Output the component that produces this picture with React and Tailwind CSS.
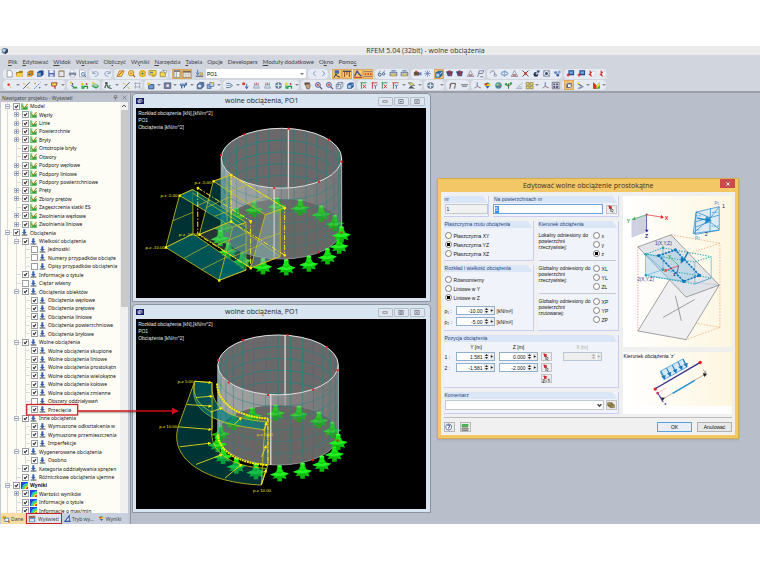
const MENU = [
    ['', 'P', 'lik'], ['', 'E', 'dytować'], ['', 'W', 'idok'], ['W', 's', 'tawić'], ['Ob', 'l', 'iczyć'],
    ['W', 'y', 'niki'], ['', 'N', 'arzędzia'], ['', 'T', 'abela'], ['Opc', 'j', 'e'], ['Developers', '', ''],
    ['', 'M', 'oduły dodatkowe'], ['O', 'k', 'no'], ['Pomo', 'c', ''],
]

// Toolbar glyphs, all drawn on a 30x30 grid
const GLYPHS = {
    page: <path d="M7 4h11l6 6v17H7z" fill="#fff" stroke="#667" strokeWidth="2" />,
    open: <><path d="M4 10h8l3-4h11v19H4z" fill="#a67c18" /><path d="M3 26l5-13h20l-5 13z" fill="#f5cf4e" /></>,
    bookA: <><path d="M4 11l9-6h12v15l-9 6H4z" fill="#b97a12" /><path d="M4 12h13v14H4z" fill="#f2b431" /><path d="M8 15h7v6H8z" fill="#2b4f9b" /></>,
    bookB: <><path d="M4 11l9-6h12v15l-9 6H4z" fill="#1d4287" /><path d="M4 12h13v14H4z" fill="#5e90d4" /><path d="M8 15h6v6H8z" fill="#e8a22d" /></>,
    save: <><path d="M4 4h22v22H4z" fill="#5b6fae" /><path d="M8 4h14v9H8z" fill="#f4f6fb" /><path d="M9 18h12v8H9z" fill="#d7dbe9" /></>,
    clip: <><path d="M5 5h20v22H5z" fill="#8a7a62" /><path d="M8 9h14v15H8z" fill="#e5e7ee" /><path d="M10 3h10v5H10z" fill="#c4b27c" /></>,
    print: <><path d="M8 3h12v10H8z" fill="#fff" stroke="#778" /><path d="M3 12h24v10H3z" fill="#7d8ba5" /><path d="M8 19h14v8H8z" fill="#f6f6f6" stroke="#667" /></>,
    preview: <><path d="M5 3h14l5 5v18H5z" fill="#fff" stroke="#889" strokeWidth="2" /><circle cx="17" cy="17" r="6" fill="#b9d8f2" stroke="#46618f" strokeWidth="2" /><path d="M21 21l6 6" stroke="#46618f" strokeWidth="3" /></>,
    undo: <path d="M6 6v9h9M7 14c5-8 17-7 17 3 0 5-5 7-12 7" fill="none" stroke="#8a9cc0" strokeWidth="3" />,
    redo: <path d="M24 6v9h-9M23 14c-5-8-17-7-17 3 0 5 5 7 12 7" fill="none" stroke="#8a9cc0" strokeWidth="3" />,
    plane: <><path d="M3 25l8-19h16l-8 19z" fill="#f4e14d" stroke="#a0502a" strokeWidth="2" /><path d="M8 22L22 7" stroke="#c2281c" strokeWidth="3" /></>,
    find: <><circle cx="14" cy="14" r="9" fill="#f8e36c" stroke="#b47a1a" strokeWidth="3" /><path d="M10 14h8" stroke="#c33" strokeWidth="3" /><path d="M20 20l7 7" stroke="#9a6a1c" strokeWidth="4" /></>,
    gear: <><circle cx="15" cy="15" r="9" fill="#fff" stroke="#e3b21c" strokeWidth="6" /><circle cx="15" cy="15" r="4" fill="#4b7d35" /></>,
    screen: <><path d="M3 5h24v15H3z" fill="#f7dc3d" stroke="#8f7a22" strokeWidth="2" /><path d="M7 9h10v5H7z" fill="#4e79b9" /><path d="M12 20h12v6H12z" fill="#c7a22c" /></>,
    tag: <><path d="M4 10h17v16H4z" fill="#f5d94c" stroke="#6b6b44" strokeWidth="2" /><path d="M12 3l14 3-4 9z" fill="#fff" stroke="#667" strokeWidth="2" /></>,
    pane: <><path d="M6 4h18v22H6z" fill="#eef0f6" stroke="#6d6d78" strokeWidth="2" /><path d="M6 4h18v5H6z" fill="#7c7c88" /><path d="M13 9v17" stroke="#7c7c88" strokeWidth="2" /></>,
    table: <><path d="M3 6h24v19H3z" fill="#eee" stroke="#7a6a5c" strokeWidth="2" /><path d="M3 6h24v5H3z" fill="#7a6a5c" /><path d="M4 17h22M11 11v14M19 11v14" stroke="#998" /></>,
    load: <><path d="M9 3v14M4 12l5 7 5-7" fill="none" stroke="#3a6fc0" strokeWidth="3" /><path d="M3 24h24" stroke="#445" strokeWidth="3" /><path d="M17 12h8v8h-8z" fill="#e3c238" stroke="#777" /></>,
    prev: <path d="M19 7l-9 8 9 8" fill="none" stroke="#6f8fd0" strokeWidth="3" />,
    next: <path d="M11 7l9 8-9 8" fill="none" stroke="#6f8fd0" strokeWidth="3" />,
    pointer: <><path d="M8 4h13v10H8z" fill="#3a66b1" /><path d="M6 26l6-11 4 7 8 2" fill="none" stroke="#232f55" strokeWidth="3" /></>,
    ruler: <><path d="M3 7h24" stroke="#3d4d77" strokeWidth="4" /><path d="M8 8v16M15 8v9M22 8v16" stroke="#8a4c24" strokeWidth="3" /></>,
    wave: <><path d="M5 22l7-16 7 10 6 6" fill="none" stroke="#2f4f9c" strokeWidth="4" /><path d="M3 25h24" stroke="#c13a2c" strokeWidth="3" /></>,
    values: <><path d="M3 8h24M3 22h24" stroke="#534a68" strokeWidth="2" /><path d="M5 15h5M13 15h5M21 15h5" stroke="#c2381f" strokeWidth="5" /></>,
    glasses: <><circle cx="9" cy="19" r="5" fill="#d6e2ee" stroke="#38598c" strokeWidth="3" /><circle cx="22" cy="16" r="4" fill="#d6e2ee" stroke="#38598c" strokeWidth="3" /><path d="M5 15l6-9M22 11l3-6" stroke="#38598c" strokeWidth="2" /></>,
    frame: <><path d="M4 24V11h22v13" fill="none" stroke="#56647e" strokeWidth="3" /><path d="M8 16h14v8H8z" fill="#d9ca5e" stroke="#555" /><path d="M8 6h14" stroke="#2f69ac" strokeWidth="3" /></>,
    camera: <><path d="M3 10h18v12H3z" fill="#6d5240" /><path d="M21 14l7-4v12l-7-4z" fill="#3e71b8" /><path d="M7 6h8v4H7z" fill="#c24a2c" /></>,
    star: <path d="M15 4v22M4 15h22M7 7l16 16M23 7L7 23" stroke="#4f6fae" strokeWidth="2" />,
    cube: <><path d="M4 11l9-6h13v14l-8 7H4z" fill="#3568a9" /><path d="M7 14h9v9H7z" fill="#b7d2ec" /><path d="M18 15l6-6" stroke="#fff" strokeWidth="2" /></>,
    redcube: <><path d="M4 9l11-5 11 5-3 15H9z" fill="#3c589a" /><path d="M11 7h9v15h-7z" fill="#c0392b" /><path d="M4 9l11 6 11-6" fill="none" stroke="#1e3467" strokeWidth="2" /></>,
    truss: <><path d="M4 25L15 5l11 20z" fill="#e8ebf2" stroke="#6c7796" strokeWidth="2" /><path d="M9 17h12v8H9z" fill="#b98383" /></>,
    flag: <path d="M6 26L11 6h15l-4 9H9M14 26h10" fill="none" stroke="#6b7793" strokeWidth="3" />,
    hook: <><path d="M5 14c0-11 14-11 14 0v7" fill="none" stroke="#7c889e" strokeWidth="3" /><circle cx="21" cy="21" r="4" fill="none" stroke="#6a7690" strokeWidth="2" /></>,
    orbit: <><ellipse cx="15" cy="15" rx="11" ry="6" fill="none" stroke="#4b82c5" strokeWidth="3" /><path d="M15 4v22" stroke="#7a8dae" strokeWidth="2" /></>,
    cross: <><path d="M5 5l20 20M25 5L5 25" stroke="#4a4248" strokeWidth="3" /><path d="M11 11h8v8h-8z" fill="#d22f22" /></>,
    ball: <><circle cx="13" cy="18" r="8" fill="#242f49" /><circle cx="16" cy="15" r="4" fill="#a9bedb" /><path d="M14 6l12-2-3 9z" fill="#2f4576" /></>,
    lens: <><path d="M4 4h22v22H4z" fill="#8d96a8" /><circle cx="15" cy="15" r="8" fill="#eef2f6" /><circle cx="15" cy="15" r="5" fill="#354a78" /></>,
    balls: <><circle cx="9" cy="12" r="5" fill="#6286c2" /><circle cx="21" cy="10" r="5" fill="#86a2cf" /><circle cx="16" cy="20" r="5" fill="#3c5f9f" /></>,
    boxred: <><path d="M8 4h19v17H8z" fill="#23518e" /><path d="M12 8h11v8H12z" fill="#78acd9" /><path d="M2 20h10M7 15v10" stroke="#d3231e" strokeWidth="4" /></>,
    arrowred: <><path d="M15 8h12v16H15z" fill="#f6f6fa" stroke="#9aa" /><path d="M9 3l8 10h-5l4 14L4 17h5z" fill="#cf2420" /></>,
    node: <><path d="M15 15l5 8" stroke="#e1b829" strokeWidth="3" /><circle cx="12" cy="12" r="4" fill="#d4261f" /></>,
    line: <><path d="M4 26L26 4" stroke="#4c5d4c" strokeWidth="3" /><path d="M3 8l8 3M18 21l8 4" stroke="#dbb42c" strokeWidth="3" /></>,
    dline: <><path d="M4 26L25 5" stroke="#4975ad" strokeWidth="3" strokeDasharray="6 3" /><circle cx="22" cy="22" r="3" fill="#58a" /><circle cx="7" cy="8" r="3" fill="#dca426" /></>,
    surf: <><path d="M5 6h19l-4 11H6z" fill="#f2d750" stroke="#ad3a2c" strokeWidth="3" /><path d="M15 17l3 9" stroke="#c9302a" strokeWidth="4" /></>,
    support: <><path d="M5 4l9 6-5 6 12 7" fill="none" stroke="#333c50" strokeWidth="3" /><path d="M11 25h16v-6H16z" fill="#22a44c" /><circle cx="7" cy="6" r="4" fill="#e6cf38" /></>,
    hinge: <><circle cx="8" cy="10" r="5" fill="#e2d23c" /><path d="M7 15v9h6v-6h12v8" fill="none" stroke="#159a3a" strokeWidth="4" /><circle cx="22" cy="10" r="3" fill="#c33" /></>,
    slab: <><path d="M3 18l10-6 14 6-10 8z" fill="#2da24e" /><path d="M3 15l10-6 14 6-10 6z" fill="#a4d8b0" stroke="#287a40" /><circle cx="8" cy="7" r="4" fill="#e2c837" /></>,
    bridge: <><path d="M3 24c2-14 8-14 11-2l11 3" fill="none" stroke="#46504d" strokeWidth="4" /><path d="M4 4h8v7H4z" fill="#3d4148" /><path d="M15 20l6-6" stroke="#37974e" strokeWidth="4" /></>,
    mesh: <path d="M4 8h22M4 20h22M8 4v22M22 4v22" stroke="#8992a6" strokeWidth="2" />,
    solid: <><path d="M9 12h17v14H9z" fill="#6f9ccc" stroke="#2e4d80" strokeWidth="3" /><circle cx="9" cy="9" r="5" fill="#e6cb3c" /></>,
    hole: <><path d="M4 6h22v19H4z" fill="#6b86b2" stroke="#3a4c6e" strokeWidth="2" /><path d="M11 11h9v9h-9z" fill="#fff" stroke="#c33" /></>,
    beam: <><path d="M4 10h20v5H4z" fill="#8ab0d8" stroke="#2e5a93" strokeWidth="2" /><path d="M9 15v10M18 15v7M24 5v8" stroke="#2e5a93" strokeWidth="4" /></>,
    set: <><path d="M4 12l8-7h14v13l-8 8H4z" fill="#5a7bad" stroke="#27406d" strokeWidth="2" /><circle cx="12" cy="17" r="5" fill="#e8edf6" /></>,
    group: <><path d="M4 11h13v14H4z" fill="#88a6cf" stroke="#33568c" strokeWidth="2" /><path d="M13 5h13v13H13z" fill="#c9d9ec" stroke="#33568c" strokeWidth="2" /><circle cx="22" cy="7" r="4" fill="#e3c22f" /></>,
    move: <><path d="M4 8h12l9 7-9 7H4" fill="none" stroke="#54729e" strokeWidth="3" /><path d="M4 15h16" stroke="#8ba6c5" strokeWidth="3" /></>,
    force: <><path d="M19 9v15M14 18l5 8 5-8" fill="none" stroke="#2f5ea7" strokeWidth="3" /><circle cx="9" cy="9" r="5" fill="#d5372a" /></>,
    table2: <><path d="M5 24l4-13h10l6 13z" fill="#c6d2e3" stroke="#8191ad" strokeWidth="2" /><path d="M9 5v8M15 5v8M21 5v8" stroke="#c9453a" strokeWidth="2" /></>,
    globe: <><circle cx="15" cy="15" r="10" fill="#6d8ea9" stroke="#4d5c6b" strokeWidth="2" /><path d="M5 15h20M15 5v20" stroke="#e4ebef" strokeWidth="3" /></>,
    zoom: <><circle cx="13" cy="13" r="8" fill="#dce7f5" stroke="#3e4c92" strokeWidth="3" /><path d="M9 13h8M13 9v8" stroke="#c8332b" strokeWidth="3" /><path d="M19 19l8 8" stroke="#5a4476" strokeWidth="4" /></>,
    grab: <><path d="M5 5h18v8H5z" fill="#5d4a3b" /><path d="M8 12l5 14h8l4-14" fill="#c8a178" stroke="#444" strokeWidth="2" /></>,
    wire: <path d="M4 12h15v14H4zM11 5h15v14M4 12l7-7v14M19 12l7-7M19 26l7-7M11 19H4" fill="none" stroke="#4e5f86" strokeWidth="2" />,
    axis: <><path d="M5 6h20M8 6v20" stroke="#2b9049" strokeWidth="3" /><path d="M13 12l10 12M23 12L13 24" stroke="#cf3a31" strokeWidth="3" /></>,
    axisb: <><path d="M5 6h20M8 6v20" stroke="#cc382f" strokeWidth="3" /><path d="M13 12l5 6 5-6M18 18v8" fill="none" stroke="#3761ad" strokeWidth="3" /></>,
    layers: <><path d="M4 6h12l10 9H14z" fill="#e7dd74" stroke="#555" strokeWidth="2" /><path d="M6 25l7-8 12 8" fill="#4d5667" stroke="#444" strokeWidth="2" /></>,
    portal: <path d="M6 26l4-18h15l-3 18M10 8L5 14" fill="none" stroke="#5c4a44" strokeWidth="3" />,
    spring: <path d="M3 12h24M7 18h16" stroke="#8b8e95" strokeWidth="4" />,
    triad: <><path d="M14 18V4" stroke="#536fb2" strokeWidth="3" /><path d="M14 18l12 5" stroke="#a85b70" strokeWidth="3" /><path d="M14 18L4 24" stroke="#6b9585" strokeWidth="3" /></>,
    rainbow: <><path d="M4 12l11-8 11 8z" fill="#2b9a47" /><path d="M3 10h24l-4 7H7z" fill="#e9cf34" /><path d="M5 8h9v6H5z" fill="#d33a2d" /><path d="M8 17h14l-7 9z" fill="#2c5fc3" /></>,
    palette: <><circle cx="15" cy="15" r="11" fill="#4e9fa0" /><path d="M9 9h6v6H9z" fill="#d8d13f" /><path d="M16 15h6v6h-6z" fill="#cc4a54" /><path d="M9 17h5v5H9z" fill="#2e65b4" /></>,
    tree: <><path d="M15 8v18M15 18l-8-5M15 16l9-5" stroke="#2c6d33" strokeWidth="3" /><circle cx="7" cy="11" r="4" fill="#2fa03c" /><circle cx="23" cy="8" r="4" fill="#2fa03c" /></>,
    slope: <path d="M4 25L26 5M4 25h20M11 20h13" stroke="#8d97aa" strokeWidth="2" />,
    tiles: <path d="M4 5h10v9H4zM17 5h10v9H17zM4 17h10v9H4zM17 17h10v9H17z" fill="#f1d765" stroke="#756638" strokeWidth="2" />,
    chess: <><path d="M4 4h23v22H4z" fill="#d6d9e2" stroke="#445" strokeWidth="2" /><path d="M8 8h6v6H8zM17 8h6v6h-6zM8 17h6v6H8zM17 17h6v6h-6z" fill="#514a7b" /></>,
    render: <><path d="M4 6h22v20H4z" fill="#d7be8d" /><path d="M7 14l5-5h11v10l-5 5H7z" fill="#5f6e86" /><path d="M12 13h8v8h-8z" fill="#fff" /></>,
    brush: <><path d="M4 24l18-8 5 3-15 8z" fill="#8393ac" /><path d="M7 9l12 8" stroke="#5d6880" strokeWidth="4" /><circle cx="8" cy="7" r="4" fill="#e8d23d" /></>,
    colors: <><path d="M4 4l11 11L26 4v22H4z" fill="#3ba33e" /><path d="M4 4l11 11v11H4z" fill="#d62f24" /><path d="M15 15L26 4v9L15 26z" fill="#f0df3a" /></>,
}

const TOOLBAR_1 = [
    { w: 'w-[84px]', items: ['page', 'open', 'bookA', 'bookB', 'save', 'clip', 'print', 'preview'] },
    { w: 'w-[23px]', items: ['undo', 'redo'] },
    { w: 'w-[54px]', items: ['plane', 'find', 'gear', 'screen', 'tag'] },
    { w: 'w-[22px]', items: ['pane*', 'table*'] },
]
const TOOLBAR_1B = [
    { w: 'w-[20px]', items: ['prev', 'next'] },
    { w: 'w-[43px]', items: ['pointer*', 'ruler*', 'wave*', 'values*'] },
    { w: 'w-[34px]', items: ['glasses', 'frame', 'frame'] },
    { w: 'w-[74px]', items: ['camera', 'star', 'cube*', 'redcube', 'redcube', 'truss', 'flag'] },
    { w: 'w-[75px]', items: ['hook', 'orbit', 'truss', 'cross', 'ball', 'lens', 'balls'] },
    { w: 'w-[43px]', items: ['boxred', 'boxred', 'arrowred', 'arrowred'] },
]
const TOOLBAR_2 = [
    { w: 'w-[62px]', items: ['node', 'v', 'line', 'dline', 'v', 'surf', 'v'] },
    { w: 'w-[33px]', items: ['support', 'hinge', 'slab'] },
    { w: 'w-[40px]', items: ['bridge', 'v', 'line', 'mesh'] },
    { w: 'w-[77px]', items: ['solid', 'v', 'hole', 'v', 'beam', 'v', 'set', 'group', 'v'] },
    { w: 'w-[76px]', items: ['move', 'v', 'force', 'table2', 'table2', 'globe', 'hinge', 'v'] },
    { w: 'w-[54px]', items: ['grab', 'zoom', 'zoom', 'wire', 'cube'] },
    { w: 'w-[65px]', items: ['axis', 'axisb', 'axis', 'axisb', 'v', 'layers', 'v'] },
    { w: 'w-[20px]', items: ['globe', 'v'] },
    { w: 'w-[23px]', items: ['portal', 'spring'] },
    { w: 'w-[89px]', items: ['triad', 'rainbow', 'palette', 'tree', 'slope', 'tiles', 'v', 'triad', 'chess'] },
    { w: 'w-[44px]', items: ['render*', 'brush', 'v', 'colors', 'v'] },
]

// [depth, label, expander, checked, icon]
const TREE = [
    [0, 'Model', '-', 1, 'model'], [1, 'Węzły', '+', 1, 'model'], [1, 'Linie', '+', 1, 'model'],
    [1, 'Powierzchnie', '+', 1, 'model'], [1, 'Bryły', '+', 1, 'model'], [1, 'Ortotropie bryły', '', 1, 'model'],
    [1, 'Otwory', '', 1, 'model'], [1, 'Podpory węzłowe', '+', 1, 'model'], [1, 'Podpory liniowe', '+', 1, 'model'],
    [1, 'Podpory powierzchniowe', '', 1, 'model'], [1, 'Pręty', '+', 1, 'model'], [1, 'Zbiory prętów', '+', 1, 'model'],
    [1, 'Zagęszczenia siatki ES', '', 1, 'model'], [1, 'Zwolnienia węzłowe', '+', 1, 'model'],
    [1, 'Zwolnienia liniowe', '+', 1, 'model'],
    [0, 'Obciążenia', '-', 1, 'load'], [1, 'Wielkość obciążenia', '-', 1, 'load'], [2, 'Jednostki', '', 0, 'load'],
    [2, 'Numery przypadków obciąże', '', 0, 'load'], [2, 'Opisy przypadków obciążenia', '', 0, 'load'],
    [1, 'Informacje o tytule', '', 1, 'load'], [1, 'Ciężar własny', '', 0, 'load'],
    [1, 'Obciążenia obiektów', '-', 1, 'load'], [2, 'Obciążenia węzłowe', '', 1, 'load'],
    [2, 'Obciążenia prętowe', '', 1, 'load'], [2, 'Obciążenia liniowe', '', 1, 'load'],
    [2, 'Obciążenia powierzchniowe', '', 1, 'load'], [2, 'Obciążenia bryłowe', '', 1, 'load'],
    [1, 'Wolne obciążenia', '-', 1, 'load'], [2, 'Wolne obciążenia skupione', '', 1, 'load'],
    [2, 'Wolne obciążenia liniowe', '', 1, 'load'], [2, 'Wolne obciążenia prostokątn', '', 1, 'load'],
    [2, 'Wolne obciążenia wielokątne', '', 1, 'load'], [2, 'Wolne obciążenia kołowe', '', 1, 'load'],
    [2, 'Wolne obciążenia zmienne', '', 1, 'load'], [2, 'Obszary oddziaływań', '', 0, 'load'],
    [2, 'Przecięcia', '', 1, 'load'], [1, 'Inne obciążenia', '-', 1, 'load'],
    [2, 'Wymuszone odkształcenia w', '', 1, 'load'], [2, 'Wymuszone przemieszczenia', '', 1, 'load'],
    [2, 'Imperfekcje', '', 1, 'load'], [1, 'Wygenerowane obciążenia', '-', 1, 'load'], [2, 'Osobno', '', 1, 'load'],
    [1, 'Kategoria oddziaływania sprężen', '', 1, 'load'], [1, 'Różniczkowe obciążenia ujemne', '', 1, 'load'],
    [0, 'Wyniki', '-', 1, 'result'], [1, 'Wartości wyników', '+', 1, 'result'],
    [1, 'Informacje o tytule', '', 1, 'result'], [1, 'Informacje o max/min', '', 1, 'result'],
]

function ToolGroup({ w, items }) {
    return (
        <div className={`flex h-[10px] shrink-0 items-center justify-between rounded-sm bg-[#e6eaf2] pl-[2px] ${w}`}>
            {items.map((item, i) => {
                if (item === 'v') {
                    return <span key={i} className="h-0 w-[4px] shrink-0 border-x-2 border-t-2 border-x-transparent border-t-[#8a8a90]" />
                }
                const on = item.endsWith('*')
                const name = on ? item.slice(0, -1) : item
                return (
                    <button
                        key={i}
                        aria-label={name}
                        className={on ? 'size-[10px] shrink-0 bg-[#fbc56a] outline outline-[#dba75a] -outline-offset-1' : 'size-[9px] shrink-0'}
                    >
                        <svg viewBox="0 0 30 30" className="size-full">{GLYPHS[name]}</svg>
                    </button>
                )
            })}
        </div>
    )
}

function TreeIcon({ kind }) {
    return (
        <svg viewBox="0 0 21 21" className="size-[7px] shrink-0">
            {kind === 'model' && (
                <>
                    <path d="M0 1v19h20V9L9 15z" fill="#35a542" />
                    <path d="M0 1h7v19H0z" fill="#7ed07c" />
                    <path d="M4 8l6 7L20 3" fill="none" stroke="#8a7b22" strokeWidth="3" />
                    <path d="M13 10l6-7" stroke="#e5b13a" strokeWidth="3" />
                </>
            )}
            {kind === 'load' && (
                <>
                    <path d="M7 1h6v8h4l-7 8-7-8h4z" fill="#3b60ad" />
                    <path d="M2 18h17" stroke="#3a4150" strokeWidth="3" />
                </>
            )}
            {kind === 'result' && (
                <>
                    <path d="M0 0h21v21H0z" fill="#2348d8" />
                    <path d="M3 21C3 10 10 3 21 3v18z" fill="#28c7e0" />
                    <path d="M7 21c0-8 6-14 14-14v14z" fill="#5ed84a" />
                    <path d="M11 21c0-6 4-10 10-10v10z" fill="#f4e234" />
                    <path d="M15 21c0-4 2-6 6-6v6z" fill="#e33a22" />
                </>
            )}
        </svg>
    )
}

function TreeRow({ depth, label, expander, checked, kind }) {
    return (
        <li className="flex min-h-0 items-center pl-[2px]">
            {Array.from({ length: depth }, (_, i) => (
                <span key={i} className="flex w-[9px] shrink-0 justify-center self-stretch">
                    <span className="w-px bg-[#dcdcd8]" />
                </span>
            ))}
            <span className="grid w-[9px] shrink-0 self-stretch">
                <span className="col-start-1 row-start-1 w-px justify-self-center bg-[#dcdcd8]" />
                <span className="col-start-1 row-start-1 h-px w-[5px] self-center justify-self-end bg-[#dcdcd8]" />
                {expander && (
                    <svg viewBox="0 0 5 5" className="col-start-1 row-start-1 size-[5px] place-self-center">
                        <rect x=".5" y=".5" width="4" height="4" fill="#fff" stroke="#b4bac6" strokeWidth="1" />
                        <path d={expander === '+' ? 'M1 2.5h3M2.5 1v3' : 'M1 2.5h3'} stroke="#6b7bb0" strokeWidth=".8" />
                    </svg>
                )}
            </span>
            <label className="flex min-w-0 items-center">
                <span className="mr-px ml-px grid shrink-0">
                    <input
                        type="checkbox"
                        defaultChecked={!!checked}
                        className="peer col-start-1 row-start-1 size-[7px] appearance-none border border-[#9a9ea6] bg-white"
                    />
                    <svg viewBox="0 0 7 7" className="pointer-events-none invisible col-start-1 row-start-1 size-[7px] peer-checked:visible">
                        <path d="M2 3.3l1.100 1.400 1.900-2.600" fill="none" stroke="#222" strokeWidth="1.100" />
                    </svg>
                </span>
                <TreeIcon kind={kind} />
                <span className={`ml-[2px] whitespace-nowrap ${label === 'Wyniki' ? 'font-bold' : ''}`}>{label}</span>
            </label>
        </li>
    )
}

function Navigator() {
    return (
        <aside className="flex w-[128px] shrink-0 flex-col border-l border-[#c3cad6] bg-[#e6e9f0] font-['Noto_Sans',sans-serif] text-[5px] leading-[8px] text-[#111]">
            <div className="flex h-[9px] shrink-0 items-center bg-[#bcc3cf] px-px text-[#444]">
                <h2 className="flex-1 whitespace-nowrap">Nawigator projektu - Wyświetl</h2>
                <button aria-label="Przypnij" className="mr-[4px]">
                    <svg viewBox="0 0 8 8" className="size-[5px]"><path d="M2 1h4v3H2zM1 4.500h6M4 4.500V8" fill="none" stroke="#666" /></svg>
                </button>
                <button aria-label="Zamknij panel">
                    <svg viewBox="0 0 8 8" className="size-[5px]"><path d="M1 1l6 6M7 1L1 7" stroke="#666" /></svg>
                </button>
            </div>
            <div className="flex min-h-0 flex-1 bg-[#fdfdf5]">
                <div className="min-w-0 flex-1 overflow-hidden">
                    <ul className="grid h-[calc(100%+2px)] auto-rows-fr">
                        {TREE.map(([depth, label, expander, checked, kind], i) => (
                            <TreeRow key={i} depth={depth} label={label} expander={expander} checked={checked} kind={kind} />
                        ))}
                    </ul>
                </div>
                <div className="flex w-[8px] shrink-0 flex-col items-center bg-[#f0f0f0]">
                    <svg viewBox="0 0 8 8" className="size-[8px]"><path d="M2 5l2-2 2 2" fill="none" stroke="#555" /></svg>
                    <div className="h-[48%] w-[7px] bg-[#c9c9ca]" />
                </div>
            </div>
            <nav className="flex h-[11px] shrink-0 items-center bg-[#c9d0dd] text-[#444]">
                <button className="flex h-full w-[24px] items-center gap-px bg-[#f6dda4] pl-px">
                    <svg viewBox="0 0 20 20" className="size-[8px] shrink-0"><path d="M1 3h9v7H1z" fill="#d9a21c" /><path d="M7 8h10v8H7z" fill="#fff" stroke="#3a6cb8" strokeWidth="2" /><path d="M15 14l4 5" stroke="#b5641c" strokeWidth="3" /></svg>
                    Dane
                </button>
                <button className="ml-px flex h-full w-[36px] items-center gap-[2px] border border-[#c22127] bg-[#e2e5ee] pl-px">
                    <svg viewBox="0 0 20 20" className="size-[8px] shrink-0"><path d="M2 4h16v14H2z" fill="#6b93cd" /><path d="M2 2h16v5H2z" fill="#9c6b4a" /><path d="M5 10h10v6H5z" fill="#dbe7f6" /></svg>
                    Wyświetl
                </button>
                <button className="ml-[2px] flex h-full items-center gap-px whitespace-nowrap">
                    <svg viewBox="0 0 20 20" className="size-[7px] shrink-0"><path d="M3 18L15 2v16z" fill="#fff" stroke="#2d55a5" strokeWidth="3" /><path d="M1 18h18" stroke="#2d55a5" strokeWidth="3" /></svg>
                    Tryb wy...
                </button>
                <button className="ml-[4px] flex h-full items-center gap-px">
                    <svg viewBox="0 0 30 30" className="size-[7px] shrink-0">{GLYPHS.rainbow}</svg>
                    Wyniki
                </button>
            </nav>
        </aside>
    )
}

function MdiWindow({ zoomed, children }) {
    return (
        <section className="flex min-h-0 flex-1 flex-col rounded-t-sm border border-[#8d949f] bg-[#d9e4f1] pr-[4px] pb-[3px] pl-[3px]">
            <header className="flex h-[14px] shrink-0 items-center">
                <svg viewBox="0 0 24 18" className="h-[6px] w-[8px] shrink-0">
                    <path d="M0 0h24v18H0z" fill="#181f66" />
                    <path d="M3 9h18M9 3v12M9 5h9M6 13h10" stroke="#fff" strokeWidth="2" />
                </svg>
                <h2 className="flex-1 pl-[2px] text-center font-['Open_Sans',sans-serif] text-[7px] leading-[10px] text-[#222]">wolne obciążenia, PO1</h2>
                {['min', 'max', 'close'].map((name) => (
                    <button key={name} aria-label={name} className="mr-px flex h-[9px] w-[15px] items-center justify-center rounded-[1px] border border-[#b3bcc9] bg-[#dfe6f0]">
                        <svg viewBox="0 0 15 12" className="h-[5px] w-[6px]">
                            {name === 'min' && <path d="M2 4h11v4H2z" fill="#fff" stroke="#778" strokeWidth="2" />}
                            {name === 'max' && <path d={zoomed ? 'M2 1h11v10H2zM5 4h5v4H5z' : 'M2 1h11v10H2zM7 4v5M5 6h5'} fill="none" stroke="#778" strokeWidth="2" />}
                            {name === 'close' && <path d="M2 1h11v10H2zM4 3l7 6M11 3L4 9" fill="none" stroke="#778" strokeWidth="2" />}
                        </svg>
                    </button>
                ))}
            </header>
            <div className="min-h-0 flex-1 bg-black">{children}</div>
        </section>
    )
}

function Support({ x, y, dim }) {
    return (
        <g transform={`translate(${x} ${y})`} opacity={dim ? 0.72 : 1}>
            <path d="M-29 2L-12 -5L-8 -14H9L12 -6L28 -2L17 6L21 15L7 12L0 19L-6 12L-22 14L-15 7z" fill="#0ccc0c" />
            <path d="M-7 -24h14v18h-14z" fill="#16e616" />
            <path d="M-12 -5l12 4 12-5 16 4-28 9-29-5z" fill="#25f025" />
            <ellipse cy="-24" rx="7" ry="3" fill="#4dff4d" />
            <path d="M-7 6h14v16h-14z" fill="#0bb90b" />
        </g>
    )
}

const RX = 181
const RY = 90

function Tank({ id, cx, top, height, supports, backSupports, reds }) {
    const bottom = top + height
    const at = (deg, y) => [cx + RX * Math.cos((deg * Math.PI) / 180), y + RY * Math.sin((deg * Math.PI) / 180)]
    const spokes = Array.from({ length: 30 }, (_, i) => i * 12 + 6)
    const rings = [1, 2, 3, 4, 5].map((i) => top + (height * i) / 6)
    return (
        <g>
            <defs>
                <linearGradient id={`${id}-wall`} x1="0" x2="1">
                    <stop offset="0" stopColor="#a4a4a4" />
                    <stop offset=".4" stopColor="#989898" />
                    <stop offset=".6" stopColor="#828282" />
                    <stop offset="1" stopColor="#747474" />
                </linearGradient>
                <clipPath id={`${id}-rim`}><ellipse cx={cx} cy={top} rx={RX} ry={RY} /></clipPath>
            </defs>
            <path d={`M${cx - RX} ${top}A${RX} ${RY} 0 0 0 ${cx + RX} ${top}V${bottom}A${RX} ${RY} 0 0 1 ${cx - RX} ${bottom}z`} fill={`url(#${id}-wall)`} />
            <ellipse cx={cx} cy={bottom} rx={RX} ry={RY} fill="#696666" />
            {backSupports.map(([x, y], i) => <Support key={i} x={x} y={y} dim />)}
            <ellipse cx={cx} cy={top} rx={RX} ry={RY} fill="#6a6868" />
            <g stroke="#198383" strokeWidth="2" fill="none">
                <g clipPath={`url(#${id}-rim)`}>
                    {rings.map((y) => <path key={y} d={`M${cx - RX} ${y}A${RX} ${RY} 0 0 1 ${cx + RX} ${y}`} />)}
                    {spokes.filter((d) => d > 180).map((d) => {
                        const [x, y] = at(d, top)
                        return <path key={d} d={`M${x} ${y}v${height}`} />
                    })}
                </g>
                {rings.map((y) => <path key={y} d={`M${cx - RX} ${y}A${RX} ${RY} 0 0 0 ${cx + RX} ${y}`} opacity=".7" />)}
                {spokes.filter((d) => d < 180).map((d) => {
                    const [x, y] = at(d, top)
                    return <path key={d} d={`M${x} ${y}v${height}`} opacity=".7" />
                })}
                <path d={`M${cx - RX} ${bottom}A${RX} ${RY} 0 0 0 ${cx + RX} ${bottom}`} stroke="#a3a3a3" />
                <path d={`M${cx - RX} ${top}v${height}M${cx + RX} ${top}v${height}`} stroke="#9dbcbc" strokeWidth="3" />
            </g>
            <path d={`M${cx + 21} ${top - RY}v${RY * 2 - 1}M${cx - 22} ${top + RY}v${height}`} stroke="#d8d8d8" strokeWidth="4" />
            <path d={`M${cx + 21} ${top + RY}v33`} stroke="#b5b5b5" strokeWidth="3" />
            <ellipse cx={cx} cy={top} rx={RX} ry={RY} fill="none" stroke="#e4e4e4" strokeWidth="3" />
            {supports.map(([x, y], i) => <Support key={i} x={x} y={y} />)}
            {reds.map(([x, y], i) => <path key={i} d={`M${x - 3} ${y - 3}h6v6h-6z`} fill="#f31616" />)}
        </g>
    )
}

function SceneCaption({ y }) {
    return (
        <g fill="#e6e6e6" fontFamily="Liberation Sans, sans-serif" fontSize="15">
            <text x="23" y={y}>Rozkład obciążenia [kN],[kN/m^2]</text>
            <text x="23" y={y + 20}>PO1</text>
            <text x="23" y={y + 40}>Obciążenia [kN/m^2]</text>
        </g>
    )
}

function PlanarScene() {
    const ends = [[147, 317], [106, 473], [266, 572], [249, 274], [207, 434], [202, 294], [361, 394], [361, 535], [302, 255], [302, 395], [463, 354], [463, 496]]
    return (
        <svg viewBox="18 54 867 571" className="size-full">
            <Tank
                id="planar"
                cx={453.5}
                top={205}
                height={213}
                backSupports={[[280, 415], [318, 380], [372, 360], [440, 350], [510, 355], [573, 374], [614, 402]]}
                supports={[[270, 447], [294, 485], [336, 514], [398, 532], [468, 535], [536, 524], [592, 502], [627, 470], [634, 436]]}
                reds={[[475, 116], [342, 133], [596, 149], [272, 195], [634, 215], [308, 259], [566, 276], [432, 295], [634, 428], [566, 488], [432, 507]]}
            />
            <g fill="#00777a" fillOpacity=".42" stroke="#c9c31d" strokeWidth="2.500">
                <path d="M147 317L187 299L188 432L106 473z" />
                <path d="M106 473L188 432L347 541L266 572z" fillOpacity=".7" />
                <path d="M147 317L187 299L347 398L307 412z" fillOpacity=".75" />
                <path d="M307 412L347 398V541L266 572z" />
                <path d="M249 274L302 255V395L207 434z" />
                <path d="M249 274L302 255L463 354L405 375z" fill="#9aa" fillOpacity=".3" />
                <path d="M207 434L302 395L450 500L361 535z" fill="#699" fillOpacity=".35" />
                <path d="M405 375L450 358V500L361 535z" fill="#9bb" fillOpacity=".4" />
            </g>
            <g fill="none" stroke="#c9c31d" strokeWidth="2">
                <path d="M127 393L188 367M160 506L237 464M213 540L290 501M200 348L240 330M253 379L294 364M287 488L347 463" />
                <path d="M228 353L302 320M259 467L345 430M310 500L395 463M301 305L352 286M353 340L405 318M384 452L450 430M187 310L347 410M290 260V395" />
            </g>
            <g fill="none" stroke="#f2e61a" strokeWidth="3" strokeDasharray="16 5 4 5">
                <path d="M202 294L361 394V535L202 434z" />
                <path d="M302 255L463 354V496L302 395z" />
            </g>
            {ends.map(([x, y], i) => <path key={i} d={`M${x - 3} ${y - 3}h7v7h-7z`} fill="#fff200" />)}
            <g fill="#e8e01f" fontFamily="Liberation Sans, sans-serif" fontSize="13">
                <text x="192" y="281">p-z -5.00</text>
                <text x="90" y="322">p-z -5.00</text>
                <text x="146" y="438">p-z -10.00</text>
                <text x="45" y="478">p-z -10.00</text>
            </g>
            <SceneCaption y={76} />
        </svg>
    )
}

function CurvedScene() {
    const arrows = [
        'M193 243L243 247', 'M197 292L246 288', 'M170 313L243 318', 'M240 336L276 323', 'M312 372L334 352', 'M143 380L243 388',
        'M148 440L241 429', 'M197 493L276 463', 'M284 534L335 492', 'M393 555L408 508', 'M394 470L408 436', 'M400 392L409 366',
    ]
    return (
        <svg viewBox="18 56 867 571" className="size-full">
            <defs>
                <marker id="tip" viewBox="0 0 8 8" refX="7" refY="4" markerWidth="4" markerHeight="4" orient="auto">
                    <path d="M0 0l8 4-8 4z" fill="#fff200" />
                </marker>
            </defs>
            <Tank
                id="curved"
                cx={443.5}
                top={194}
                height={211}
                backSupports={[[270, 402], [310, 368], [366, 348], [436, 340], [506, 344], [566, 362], [606, 392]]}
                supports={[[262, 434], [278, 470], [318, 499], [377, 516], [448, 522], [517, 514], [575, 493], [613, 463], [624, 428]]}
                reds={[[472, 104], [337, 120], [590, 140], [263, 180], [622, 210], [295, 247], [549, 268], [413, 284], [622, 421], [548, 480]]}
            />
            <g fill="#007b7d" stroke="#c9c31d" strokeWidth="2.500">
                <path d="M193 243C170 340 260 372 403 389L408 365C300 356 238 326 245 247z" fillOpacity=".65" />
                <path d="M193 243L143 380C115 480 230 548 393 555L408 505C300 500 236 455 245 388V336C205 315 185 290 193 243z" fillOpacity=".42" />
                <path d="M245 247V388" fill="none" />
                <path d="M403 389L393 555L413 495L413 355z" fillOpacity=".15" />
            </g>
            <g fill="none" stroke="#f2e61a" strokeWidth="2.500">
                {arrows.map((d) => <path key={d} d={d} markerEnd="url(#tip)" />)}
            </g>
            <path d="M260 250C262 312 325 350 413 355" fill="none" stroke="#ffee00" strokeWidth="6" strokeDasharray="6 2" />
            <path d="M262 403C266 455 325 490 413 495" fill="none" stroke="#ffee00" strokeWidth="6" strokeDasharray="6 2" />
            <path d="M413 355V495" stroke="#ffee00" strokeWidth="3" strokeDasharray="12 4 3 4" />
            <g fill="#e8e01f" fontFamily="Liberation Sans, sans-serif" fontSize="13">
                <text x="142" y="249">p-z 5.00</text>
                <text x="86" y="385">p-z 10.00</text>
                <text x="380" y="409">p-z 5.00</text>
                <text x="368" y="575">p-z 10.00</text>
            </g>
            <SceneCaption y={78} />
        </svg>
    )
}

function Group({ title, className = '', children }) {
    return (
        <fieldset className={`relative min-w-0 border-r border-b border-[#c9cdf2] bg-[#f0f4fa] pt-[8px] ${className}`}>
            <legend className="absolute inset-x-0 top-0 h-[7px] whitespace-nowrap bg-[#dae6f5] pl-px leading-[7px] text-[#23427c] [clip-path:polygon(0_0,calc(100%-5px)_0,100%_100%,0_100%)]">
                {title}
            </legend>
            {children}
        </fieldset>
    )
}

function Radio({ name, label, checked }) {
    return (
        <label className="flex h-[9px] items-center gap-[2px]">
            <input
                type="radio"
                name={name}
                defaultChecked={checked}
                className="size-[7px] shrink-0 appearance-none rounded-full border border-[#7c7c7c] bg-white checked:bg-[radial-gradient(circle,#000_45%,#fff_55%)]"
            />
            {label}
        </label>
    )
}

function Spin({ label, value, disabled }) {
    return (
        <div className={`flex h-[9px] w-[39px] items-center border ${disabled ? 'border-[#b9c6d6] bg-[#eeeeee]' : 'border-[#8fb1cf] bg-white'}`}>
            <input aria-label={label} defaultValue={value} disabled={disabled} className="h-full w-[27px] min-w-0 bg-transparent pr-px text-right" />
            <button aria-label={`${label} krok`} disabled={disabled} className="flex h-full w-[5px] items-center justify-center bg-[#e9e9e9]">
                <svg viewBox="0 0 5 7" className="h-[7px] w-[5px]"><path d="M1 3l1.500-2L4 3zM1 4l1.500 2L4 4z" fill={disabled ? '#aaa' : '#222'} /></svg>
            </button>
            <button aria-label={`${label} lista`} disabled={disabled} className="flex h-full w-[5px] items-center justify-center border-l border-white bg-[#e9e9e9]">
                <svg viewBox="0 0 5 7" className="h-[7px] w-[5px]"><path d="M1 2l3 1.500L1 5z" fill={disabled ? '#aaa' : '#222'} /></svg>
            </button>
        </div>
    )
}

function PickButton({ label, pair }) {
    return (
        <button aria-label={label} className="flex h-[9px] w-[11px] shrink-0 items-center justify-center border border-[#c4c4c4] bg-[#ececec]">
            <svg viewBox="0 0 24 24" className="size-[8px]">
                <path d="M5 2l7 7M12 3v6H6" fill="none" stroke="#c8242e" strokeWidth="4" />
                {pair
                    ? <path d="M2 14h6l-6 8h6M10 18h5M17 14l4-2v10" fill="none" stroke="#222" strokeWidth="2" />
                    : <path d="M11 10l1 10 3-3 3 6M12 10l8 6" fill="none" stroke="#333" strokeWidth="2" />}
            </svg>
        </button>
    )
}

function AxesPicture() {
    return (
        <svg viewBox="24 65 326 451" className="size-full">
            <path d="M50 135L94 121V172L50 188z" fill="#cfd0e2" stroke="#b7b9d2" />
            <path d="M94 121V170" stroke="#2b2b8f" strokeWidth="2" />
            <path d="M89 166h11l-5 8z" fill="#2b2b8f" />
            <path d="M94 121L140 128" stroke="#ec1c24" strokeWidth="2" />
            <path d="M137 122l9 7-10 4z" fill="#ec1c24" />
            <path d="M94 121L54 134" stroke="#35b04a" strokeWidth="2" />
            <path d="M59 127l-9 9 11 1z" fill="#35b04a" />
            <circle cx="94" cy="120" r="3" fill="#cc3355" />
            <g fontFamily="Liberation Sans, sans-serif" fontWeight="bold" fontSize="16">
                <text x="148" y="137" fill="#ec1c24">X</text>
                <text x="34" y="145" fill="#35b04a">Y</text>
                <text x="89" y="189" fill="#2b2b8f">Z</text>
            </g>
            <g fill="none" stroke="#1c86c8" strokeWidth="2">
                <path d="M242 113L311 97V167L233 177z" fill="#dbeaf3" />
                <path d="M242 113L239 180L311 167M285 102L283 172M240 142L311 122M240 158L283 142L311 164M242 113L285 130L311 97M233 177L285 130" />
                <path d="M242 124h16M238 166h14M290 114h18M288 155h20" strokeDasharray="5 3" />
                <path d="M245 131L276 137" strokeWidth="4" />
                <path d="M273 127l14 11-17 8z" fill="#1c86c8" />
            </g>
            <g fill="#1c86c8" fontFamily="Liberation Sans, sans-serif" fontSize="16">
                <text x="297" y="90">p₁</text>
                <text x="239" y="192">p₂</text>
                <text x="319" y="101" fill="#22277b">1</text>
                <text x="268" y="185" fill="#22277b">2</text>
            </g>
            <g fill="none" stroke="#f0a36a" strokeWidth="2" strokeDasharray="5 4">
                <path d="M167 181L313 206V457L212 494M167 432L313 457M68 217L212 240V365M313 206L212 240" />
            </g>
            <path d="M68 217V468M167 181V432M68 468L167 432" fill="none" stroke="#ee7770" strokeWidth="2" strokeDasharray="4 4" />
            <g stroke="#77777b" strokeWidth="2">
                <path d="M163 314L311 331L212 494L68 468z" fill="#f0f0f2" />
                <path d="M68 217L167 181L311 331L212 367z" fill="#d9dde4" fillOpacity=".75" />
                <path d="M143 428L238 374M180 363L198 438" />
            </g>
            <g fill="#8dc3e4" fillOpacity=".4" stroke="#5aaedb" strokeWidth="2">
                <path d="M91 239L130 243L205 320L91 302z" />
                <path d="M130 243L180 226L252 302L205 320z" />
                <path d="M91 302L143 285L91 239M143 220V285M287 246V310L238 328V262M238 328L287 310" fill="none" />
            </g>
            <path d="M143 220L287 246L238 262L91 239zM91 302L238 328M143 285L287 310" fill="none" stroke="#25a9b8" strokeWidth="3" strokeDasharray="4 4" />
            <path d="M130 243L180 226L252 302L205 320z" fill="none" stroke="#1478bd" strokeWidth="5" strokeDasharray="6 4" />
            <path d="M218 232L206 254" stroke="#1478bd" strokeWidth="4" />
            <path d="M196 248l15 7-15 12z" fill="#1478bd" />
            <path d="M190 273L150 288" stroke="#ec1c24" strokeWidth="2" />
            <path d="M190 273L166 250" stroke="#35b04a" strokeWidth="2" />
            <path d="M190 273L184 298" stroke="#2b2b8f" strokeWidth="2" />
            <g fontFamily="Liberation Sans, sans-serif" fontSize="14" fontWeight="bold">
                <text x="147" y="293" fill="#ec1c24">x</text>
                <text x="159" y="250" fill="#35b04a">y</text>
                <text x="174" y="304" fill="#2b2b8f">z</text>
            </g>
            {[[92, 239], [143, 220], [92, 302], [143, 285]].map(([x, y]) => <circle key={`${x}-${y}`} cx={x} cy={y} r="4" fill="#20a5b8" />)}
            {[[130, 243], [180, 226], [252, 302], [205, 320]].map(([x, y]) => <circle key={`${x}-${y}`} cx={x} cy={y} r="5" fill="#1478bd" />)}
            <g fill="#3d2c8c" fontFamily="Liberation Sans, sans-serif" fontSize="14">
                <text x="119" y="212">1(X,Y,Z)</text>
                <text x="66" y="320">2(X,Y,Z)</text>
            </g>
        </svg>
    )
}

function DirectionPicture() {
    return (
        <svg viewBox="24 533 326 160" className="size-full">
            <path d="M135 590L203 553L215 577L146 615z" fill="#d3e7f4" stroke="#2b8ecb" strokeWidth="2" />
            <g stroke="#1c78bd" strokeWidth="3" fill="#1c78bd">
                {[[137, 590], [154, 581], [171, 572], [188, 562], [203, 554]].map(([x, y]) => (
                    <g key={x}>
                        <path d={`M${x} ${y}l9 18`} />
                        <path d={`M${x + 4} ${y + 16}l8-3-1 9z`} />
                    </g>
                ))}
            </g>
            <path d="M120 642L253 564" stroke="#342d8c" strokeWidth="4" />
            <circle cx="120" cy="643" r="5" fill="#ec1c24" />
            <circle cx="254" cy="564" r="5" fill="#ec1c24" />
            <path d="M142 673L268 599" stroke="#222" />
            <path d="M172 656L238 617" stroke="#2492d0" strokeWidth="4" />
            <path d="M158 620L172 656M225 580L238 617" stroke="#8bc4e6" strokeWidth="1" strokeDasharray="2 3" />
            <path d="M262 595l12 3-8 9zM137 668l12 1-7 9z" fill="#222" />
            <path d="M264 585l8 20M134 665l8 18" stroke="#222" />
            <path d="M127 655L144 681" stroke="#3e2c8c" strokeWidth="3" />
            <path d="M127 655L153 640" stroke="#b3547a" />
            <circle cx="127" cy="655" r="4" fill="#c03060" />
            <g fontFamily="Liberation Sans, sans-serif" fontSize="13">
                <text x="268" y="597" fill="#222">L</text>
                <text x="147" y="690" fill="#2b2b8f" fontWeight="bold">z</text>
            </g>
        </svg>
    )
}

function EditDialog() {
    return (
        <section role="dialog" aria-label="Edytować wolne obciążenie prostokątne" className="border border-[#d6ab4d] bg-[#f3c765] px-[3px] pb-[3px] shadow-sm">
            <header className="flex h-[13px] items-center">
                <h2 className="flex-1 pl-[16px] text-center font-['Open_Sans',sans-serif] text-[7px] leading-[10px] text-[#3a3020]">Edytować wolne obciążenie prostokątne</h2>
                <button aria-label="Zamknij" className="flex h-[9px] w-[15px] items-center justify-center self-start bg-[#cb4b4b]">
                    <svg viewBox="0 0 8 8" className="size-[4px]"><path d="M1 1l6 6M7 1L1 7" stroke="#fff" strokeWidth="2" /></svg>
                </button>
            </header>
            <div className="bg-[#f0f0f0] px-[3px] pt-[4px] pb-[3px] font-['Liberation_Sans',Arial,sans-serif] text-[5px] leading-[6px] text-[#111]">
                <div className="flex gap-[4px]">
                    <div className="flex flex-[8] flex-col gap-[4px]">
                        <div className="flex gap-[4px]">
                            <Group title="nr" className="h-[21px] flex-[5]">
                                <input aria-label="nr" defaultValue="1" className="ml-px h-[10px] w-[43px] border border-[#c8c8c8] bg-[#f1f1f1] px-px" />
                            </Group>
                            <Group title="Na powierzchniach nr" className="h-[21px] flex-[14]">
                                <div className="flex items-center justify-between gap-[3px] pr-px">
                                    <div className="flex h-[10px] min-w-0 flex-1 items-center border border-[#6fa3d8] bg-white">
                                        <input aria-label="Na powierzchniach nr" defaultValue="5" className="ml-px h-[7px] w-[4px] bg-[#3c8ee6] text-white" />
                                    </div>
                                    <PickButton label="Wybierz powierzchnie" />
                                </div>
                            </Group>
                        </div>
                        <div className="grid grid-cols-[10fr_9fr] gap-[4px]">
                            <div className="flex flex-col gap-[4px]">
                                <Group title="Płaszczyzna rzutu obciążenia" className="h-[40px] pl-px">
                                    <div className="flex flex-col pt-[2px]">
                                        <Radio name="plane" label="Płaszczyzna XY" />
                                        <Radio name="plane" label="Płaszczyzna YZ" checked />
                                        <Radio name="plane" label="Płaszczyzna XZ" />
                                    </div>
                                </Group>
                                <Group title="Rozkład i wielkość obciążenia" className="h-[66px] pl-px">
                                    <div className="flex flex-col pt-[2px]">
                                        <Radio name="spread" label="Równomierny" />
                                        <Radio name="spread" label="Liniowe w Y" />
                                        <Radio name="spread" label="Liniowe w Z" checked />
                                    </div>
                                    <div className="mt-[4px] flex flex-col gap-[2px]">
                                        <div className="flex items-center gap-[2px]"><span className="w-[9px]">p₁ :</span><Spin label="p1" value="-10.00" /><span>[kN/m²]</span></div>
                                        <div className="flex items-center gap-[2px]"><span className="w-[9px]">p₂ :</span><Spin label="p2" value="-5.00" /><span>[kN/m²]</span></div>
                                    </div>
                                </Group>
                            </div>
                            <Group title="Kierunek obciążenia" className="h-[110px] pr-[2px] pl-px">
                                {[
                                    ['Lokalny odniesiony do powierzchni rzeczywistej:', ['x', 'y', 'z']],
                                    ['Globalny odniesiony do powierzchni rzeczywistej:', ['XL', 'YL', 'ZL']],
                                    ['Globalny odniesiony do powierzchni rzutowanej:', ['XP', 'YP', 'ZP']],
                                ].map(([text, options], i) => (
                                    <div key={text} className={`flex pt-[2px] ${i < 2 ? 'mb-px border-b border-[#c8c8c8] pb-[2px]' : ''}`}>
                                        <p className="w-[54px] pt-px pr-[2px]">{text}</p>
                                        <div>{options.map((o) => <Radio key={o} name="direction" label={o} checked={o === 'z'} />)}</div>
                                    </div>
                                ))}
                            </Group>
                        </div>
                        <Group title="Pozycja obciążenia" className="h-[53px] pl-px">
                            <div className="grid grid-cols-[9px_41px_40px_20px_39px] gap-x-[2px] gap-y-[2px] pt-px">
                                <span className="col-start-2 text-center">Y [m]</span>
                                <span className="text-center">Z [m]</span>
                                <span />
                                <span className="text-center text-[#aaa]">X [m]</span>
                                <span className="pt-[2px]">1 :</span>
                                <Spin label="Y1" value="1.581" />
                                <Spin label="Z1" value="0.000" />
                                <PickButton label="Wskaż punkt 1" />
                                <Spin label="X" value="" disabled />
                                <span className="pt-[2px]">2 :</span>
                                <Spin label="Y2" value="-1.581" />
                                <Spin label="Z2" value="-2.000" />
                                <PickButton label="Wskaż punkt 2" />
                                <span />
                                <span className="col-span-3" />
                                <PickButton label="Wskaż oba punkty" pair />
                            </div>
                        </Group>
                        <Group title="Komentarz" className="h-[22px] pl-px">
                            <div className="flex items-center gap-[2px] pr-px">
                                <div className="grid min-w-0 flex-1">
                                    <select aria-label="Komentarz" className="col-start-1 row-start-1 h-[10px] w-full appearance-none border border-[#c0c8d4] bg-white text-[5px]"><option /></select>
                                    <svg viewBox="0 0 8 8" className="pointer-events-none col-start-1 row-start-1 mr-[2px] size-[5px] self-center justify-self-end"><path d="M1 2l3 3 3-3" fill="none" stroke="#333" strokeWidth="2" /></svg>
                                </div>
                                <button aria-label="Lista komentarzy" className="flex h-[10px] w-[11px] items-center justify-center border border-[#c4c4c4] bg-[#ececec]">
                                    <svg viewBox="0 0 24 24" className="size-[8px]"><path d="M2 5h13v9H2zM5 8h13v9H5zM9 11h13v9H9z" fill="#cdb86a" stroke="#6b6038" strokeWidth="2" /></svg>
                                </button>
                            </div>
                        </Group>
                    </div>
                    <div className="flex flex-[5] flex-col gap-[5px]">
                        <div className="h-[151px] bg-linear-to-r from-white to-[#fdf6e0]"><AxesPicture /></div>
                        <div className="flex flex-1 flex-col bg-white">
                            <div className="flex h-[54px] flex-col bg-linear-to-r from-white to-[#fdf6e0]">
                                <p className="absolute pt-px pl-px">Kierunek obciążenia 'z'</p>
                                <DirectionPicture />
                            </div>
                        </div>
                    </div>
                </div>
                <div className="mt-[3px] flex items-center gap-[5px] border-t border-[#bdbdbd] pt-[4px]">
                    <button aria-label="Pomoc" className="flex h-[10px] w-[11px] items-center justify-center border border-[#b8b8b8] bg-[#ececec]">
                        <svg viewBox="0 0 24 24" className="size-[8px]"><circle cx="11" cy="12" r="9" fill="#fff" stroke="#334a86" strokeWidth="2" /><path d="M8 9c1-5 8-3 6 1-1 2-3 2-3 5M11 17v2" fill="none" stroke="#223a7a" strokeWidth="3" /></svg>
                    </button>
                    <button aria-label="Jednostki" className="flex h-[10px] w-[11px] items-center justify-center border border-[#b8b8b8] bg-[#ececec]">
                        <svg viewBox="0 0 24 24" className="size-[8px]"><path d="M2 3h20v9H2z" fill="#4bb052" /><path d="M3 15h18v7H3zM9 15v7M15 15v7" fill="#fff" stroke="#333" strokeWidth="2" /></svg>
                    </button>
                    <span className="flex-1" />
                    <button className="h-[10px] w-[35px] border border-[#5aa1dd] bg-[#e8eef4]">OK</button>
                    <button className="h-[10px] w-[35px] border border-[#b0b0b0] bg-[#e8e8e8]">Anulować</button>
                </div>
            </div>
        </section>
    )
}

export default function App() {
    return (
        <div className="flex h-screen flex-col bg-white py-[46px]">
            <header className="flex h-[9px] shrink-0 items-center bg-[#ebebeb] pl-px">
                <svg viewBox="0 0 24 24" className="size-[8px] shrink-0">
                    <path d="M2 6l9-4 10 4v10l-9 6-9-5z" fill="#5b7ea5" />
                    <path d="M11 10l9-3v9l-8 6z" fill="#2c405f" />
                    <circle cx="9" cy="10" r="5" fill="#b8cddc" />
                </svg>
                <h1 className="flex-1 pl-[82px] text-center font-['Open_Sans',sans-serif] text-[7px] leading-[9px] text-[#333]">RFEM 5.04 (32bit) - wolne obciążenia</h1>
            </header>
            <div className="flex shrink-0 flex-col bg-[#d0d5de]">
                <nav className="flex h-[13px] items-center gap-[5px] pl-[8px] font-[Lato,sans-serif] text-[6px] leading-[8px] text-[#444]">
                    {MENU.map(([before, key, after]) => (
                        <button key={before + key + after} className="whitespace-nowrap">{before}<u>{key}</u>{after}</button>
                    ))}
                </nav>
                <div className="flex h-[11px] items-center gap-[2px] pl-[3px]">
                    {TOOLBAR_1.map((group, i) => <ToolGroup key={i} {...group} />)}
                    <div className="flex h-[10px] w-[112px] items-center gap-[2px] pl-px">
                        <button aria-label="Przypadek obciążenia" className="size-[9px] shrink-0"><svg viewBox="0 0 30 30">{GLYPHS.load}</svg></button>
                        <div className="grid min-w-0 flex-1">
                            <select aria-label="Przypadek" className="col-start-1 row-start-1 h-[9px] w-full appearance-none bg-white pl-px font-['Liberation_Sans',sans-serif] text-[5px] leading-[8px]"><option>PO1</option></select>
                            <span className="pointer-events-none col-start-1 row-start-1 mr-[2px] self-center justify-self-end border-x-2 border-t-2 border-x-transparent border-t-[#777]" />
                        </div>
                    </div>
                    {TOOLBAR_1B.map((group, i) => <ToolGroup key={i} {...group} />)}
                </div>
                <div className="flex h-[12px] items-center gap-[2px] pl-[3px]">
                    {TOOLBAR_2.map((group, i) => <ToolGroup key={i} {...group} />)}
                </div>
                <div className="h-[2px] bg-[#9c9fa8]" />
            </div>
            <main className="relative flex min-h-0 flex-1 bg-[#b8bfcb]">
                <Navigator />
                <div className="w-[3px] shrink-0 border-r border-[#8d949f] bg-[#c3cad5]" />
                <div className="grid min-w-0 flex-1 grid-cols-[10fr_11fr]">
                    <div className="flex min-h-0 flex-col gap-[2px] pb-[11px] pl-px">
                        <MdiWindow><PlanarScene /></MdiWindow>
                        <MdiWindow zoomed><CurvedScene /></MdiWindow>
                    </div>
                    <div className="pt-[85px] pr-[21px] pl-[6px]">
                        <EditDialog />
                    </div>
                </div>
                {/* Callout from the tree entry to the scene */}
                <svg viewBox="0 0 156 14" className="pointer-events-none absolute top-[310px] left-[26px] h-[14px] w-[156px]">
                    <rect x=".7" y="1.500" width="51" height="10.500" fill="none" stroke="#c9252b" strokeWidth="1.300" />
                    <path d="M53 9.500H147" stroke="#000" strokeOpacity=".25" strokeWidth="1.500" />
                    <path d="M52 8H148" stroke="#cb1016" strokeWidth="1.300" />
                    <path d="M146 4.500L153 8L146 11.500z" fill="#cb1016" />
                </svg>
            </main>
        </div>
    )
}
